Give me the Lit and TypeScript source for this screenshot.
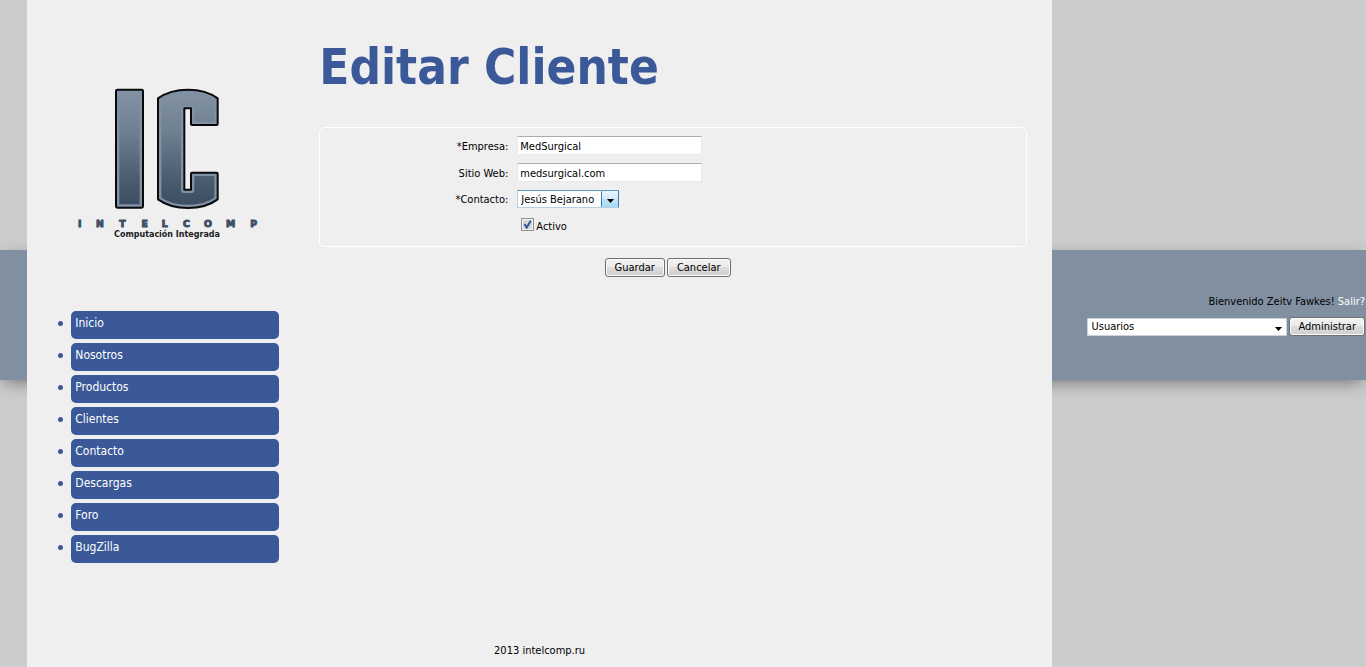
import { LitElement, html, css, svg } from "lit";
import { customElement, property, state } from "lit/decorators.js";

@customElement("intelcomp-logo")
class IntelcompLogo extends LitElement {
  static styles = css`
    :host {
      display: block;
    }
    .mark {
      display: block;
      width: 220px;
      height: 180px;
    }
    .name {
      font: bold 28px "DejaVu Sans", sans-serif;
      fill: #3c4f66;
      stroke: #3c4f66;
      stroke-width: 3;
      text-anchor: middle;
    }
    .tagline {
      font: bold 24px "DejaVu Sans", sans-serif;
      fill: #1c1c22;
      text-anchor: middle;
    }
  `;

  render() {
    return html`
      <svg class="mark" viewBox="0 0 660 540" role="img" aria-label="Intelcomp">
        ${svg`
        <defs>
          <linearGradient id="steel" gradientUnits="userSpaceOnUse" x1="0" y1="44" x2="0" y2="400">
            <stop offset="0" stop-color="#8393a4" />
            <stop offset="0.35" stop-color="#6f8091" />
            <stop offset="0.75" stop-color="#4c5d70" />
            <stop offset="1" stop-color="#3b4b60" />
          </linearGradient>
          <path id="i" d="M172 44H245Q249 44 249 48V394Q249 398 245 398H172Q168 398 168 394V48Q168 44 172 44Z" />
          <path id="c" d="M294 70Q330 44 384 44Q438 44 473 70V147Q473 150 470 150H396Q393 150 393 147V100H373V344H393V296Q393 293 396 293H470Q473 293 473 296V373Q438 399 384 399Q330 399 294 373Z" />
          <clipPath id="ci"><use href="#i" /></clipPath>
          <clipPath id="cc"><use href="#c" /></clipPath>
        </defs>
        <g fill="url(#steel)" stroke="#8091a6" stroke-width="20" stroke-linejoin="round">
          <use href="#i" clip-path="url(#ci)" />
          <use href="#c" clip-path="url(#cc)" />
        </g>
        <g fill="none" stroke="#08090b" stroke-width="6" stroke-linejoin="round">
          <use href="#i" />
          <use href="#c" />
        </g>
        <text class="name" x="59 120 187 254 314 379 444 512 581" y="456">INTELCOMP</text>
        <text class="tagline" x="321" y="486">Computación Integrada</text>`}
      </svg>
    `;
  }
}

@customElement("side-menu")
class SideMenu extends LitElement {
  @property({ attribute: false }) items: string[] = [];

  static styles = css`
    :host {
      display: block;
    }
    .list {
      display: grid;
      gap: 4px;
      margin: 0;
      padding: 0;
      list-style: none;
    }
    .item {
      display: grid;
      grid-template-columns: 5px 1fr;
      column-gap: 8px;
    }
    .item::before {
      content: "";
      width: 5px;
      height: 5px;
      margin-top: 10px;
      border-radius: 50%;
      background: #3b5998;
    }
    .link {
      height: 28px;
      padding: 0 4px;
      box-sizing: border-box;
      border-radius: 5px;
      background: #3b5998;
      color: #fff;
      font-size: 12px;
      line-height: 24px;
      text-decoration: none;
    }
  `;

  render() {
    return html`
      <nav>
        <ul class="list">
          ${this.items.map(
            (name) => html`<li class="item"><a class="link" href="#${name.toLowerCase()}">${name}</a></li>`
          )}
        </ul>
      </nav>
    `;
  }
}

@customElement("app-root")
class AppRoot extends LitElement {
  @state() private active = true;

  static styles = css`
    :host {
      display: grid;
      grid-template-columns: minmax(0, 1fr);
      min-height: 100vh;
      background: #ccc;
      color: #000;
      font-family: Tahoma, "DejaVu Sans Condensed", "Noto Sans", sans-serif;
      font-size: 11px;
      line-height: 14px;
    }
    .band,
    .page {
      grid-area: 1 / 1;
    }
    .band {
      display: flex;
      flex-direction: column;
      align-items: flex-end;
      justify-content: center;
      gap: 8px;
      height: 130px;
      margin-top: 250px;
      padding: 1px 1px 0 0;
      box-sizing: border-box;
      background: #8190a0;
      box-shadow: 0 5px 16px -4px rgba(0, 0, 0, 0.5);
    }
    .welcome {
      margin: 0;
    }
    .exit {
      color: #fff;
      text-decoration: none;
    }
    .admin {
      display: flex;
      align-items: center;
      gap: 2px;
    }
    .page {
      display: flex;
      flex-direction: column;
      width: 75%;
      margin-left: 2%;
      background: #efefef;
    }
    .columns {
      display: grid;
      grid-template-columns: 252px minmax(0, 1fr);
      column-gap: 40px;
      flex: 1;
      padding: 0 25px 0 0;
    }
    .logo {
      margin: 75px 0 56px 33px;
    }
    .menu {
      margin-left: 31px;
    }
    .title {
      margin: 35px 0 27px;
      color: #3b5998;
      font-size: 49px;
      line-height: 65px;
      font-weight: bold;
    }
    .fields {
      display: grid;
      grid-template-columns: 188px 1fr;
      column-gap: 9px;
      row-gap: 8px;
      align-items: center;
      margin: 0;
      padding: 8px 0 11px;
      border: 1px solid #fff;
      border-radius: 5px;
    }
    .label {
      padding-top: 2px;
      text-align: right;
    }
    .text,
    .select,
    .button {
      box-sizing: border-box;
      font: inherit;
      color: #000;
    }
    .text {
      width: 185px;
      height: 19px;
      padding: 2px 2px 0;
      border: 1px solid #e3e9ef;
      border-top-color: #abadb3;
      border-radius: 1px;
      background: #fff;
    }
    .select {
      appearance: none;
      height: 18px;
      padding: 1px 3px 0;
      border: 1px solid #c9d3de;
      border-radius: 1px;
      background: #fff
        url("data:image/svg+xml,%3Csvg xmlns='http://www.w3.org/2000/svg' width='7' height='4'%3E%3Cpath d='M0 0h7L3.500 4z'/%3E%3C/svg%3E")
        no-repeat right 4px top 8px;
    }
    .contact {
      justify-self: start;
      width: 102px;
      border-color: #5a9bc4 #3c7fb1 #b5cfe7 #b5cfe7;
      background:
        url("data:image/svg+xml,%3Csvg xmlns='http://www.w3.org/2000/svg' width='18' height='18'%3E%3Cdefs%3E%3ClinearGradient id='g' x2='0' y2='1'%3E%3Cstop stop-color='%23eaf6fd'/%3E%3Cstop offset='.5' stop-color='%23d0ebfa'/%3E%3Cstop offset='.5' stop-color='%23bce5fc'/%3E%3Cstop offset='1' stop-color='%23a7d9f5'/%3E%3C/linearGradient%3E%3C/defs%3E%3Crect x='.5' y='.5' width='17' height='17' rx='1' fill='url(%23g)' stroke='%233c7fb1'/%3E%3Cpath d='M6 9h7l-3.500 4z'/%3E%3C/svg%3E")
          no-repeat right top border-box,
        #fff;
    }
    .section {
      width: 200px;
    }
    .active {
      display: flex;
      grid-column: 2;
      align-items: center;
      gap: 2px;
      padding: 2px 0 0 4px;
    }
    .check {
      appearance: none;
      width: 13px;
      height: 13px;
      margin: 0 0 4px;
      border: 1px solid #8e8f8f;
      box-shadow: inset 0 0 0 1px #f4f4f4;
      background: #d4d8de;
    }
    .check:checked {
      background: #d4d8de
        url("data:image/svg+xml,%3Csvg xmlns='http://www.w3.org/2000/svg' width='11' height='11'%3E%3Cpath d='M2.500 5L4.700 8.500L8.800 1.800' fill='none' stroke='%233a539b' stroke-width='2'/%3E%3C/svg%3E")
        no-repeat;
    }
    .button {
      height: 19px;
      padding: 1px 9px 0;
      border: 1px solid #707070;
      border-radius: 3px;
      background: linear-gradient(#f2f2f2, #ebebeb 50%, #ddd 50%, #cfcfcf);
      box-shadow: inset 0 0 0 1px #fafafa;
    }
    .admin .button {
      padding: 1px 8px 0;
    }
    .actions {
      display: flex;
      justify-content: center;
      gap: 2px;
      margin: 11px 11px 0 0;
    }
    .footer {
      padding-bottom: 9px;
      text-align: center;
    }
  `;

  render() {
    return html`
      <header class="band">
        <p class="welcome">Bienvenido Zeitv Fawkes! <a class="exit" href="#salir">Salir?</a></p>
        <div class="admin">
          <select class="select section" aria-label="Sección">
            <option>Usuarios</option>
          </select>
          <button class="button" type="button">Administrar</button>
        </div>
      </header>
      <div class="page">
        <div class="columns">
          <aside>
            <intelcomp-logo class="logo"></intelcomp-logo>
            <side-menu
              class="menu"
              .items=${["Inicio", "Nosotros", "Productos", "Clientes", "Contacto", "Descargas", "Foro", "BugZilla"]}
            ></side-menu>
          </aside>
          <main>
            <h1 class="title">Editar Cliente</h1>
            <form @submit=${(e: Event) => e.preventDefault()}>
              <fieldset class="fields">
                <label class="label" for="empresa">*Empresa:</label>
                <input class="text" id="empresa" type="text" value="MedSurgical" />
                <label class="label" for="sitio">Sitio Web:</label>
                <input class="text" id="sitio" type="text" value="medsurgical.com" />
                <label class="label" for="contacto">*Contacto:</label>
                <select class="select contact" id="contacto">
                  <option>Jesús Bejarano</option>
                </select>
                <div class="active">
                  <input
                    class="check"
                    id="activo"
                    type="checkbox"
                    .checked=${this.active}
                    @change=${(e: Event) => (this.active = (e.target as HTMLInputElement).checked)}
                  />
                  <label for="activo">Activo</label>
                </div>
              </fieldset>
              <div class="actions">
                <button class="button" type="submit">Guardar</button>
                <button class="button" type="button">Cancelar</button>
              </div>
            </form>
          </main>
        </div>
        <footer class="footer">2013 intelcomp.ru</footer>
      </div>
    `;
  }
}
